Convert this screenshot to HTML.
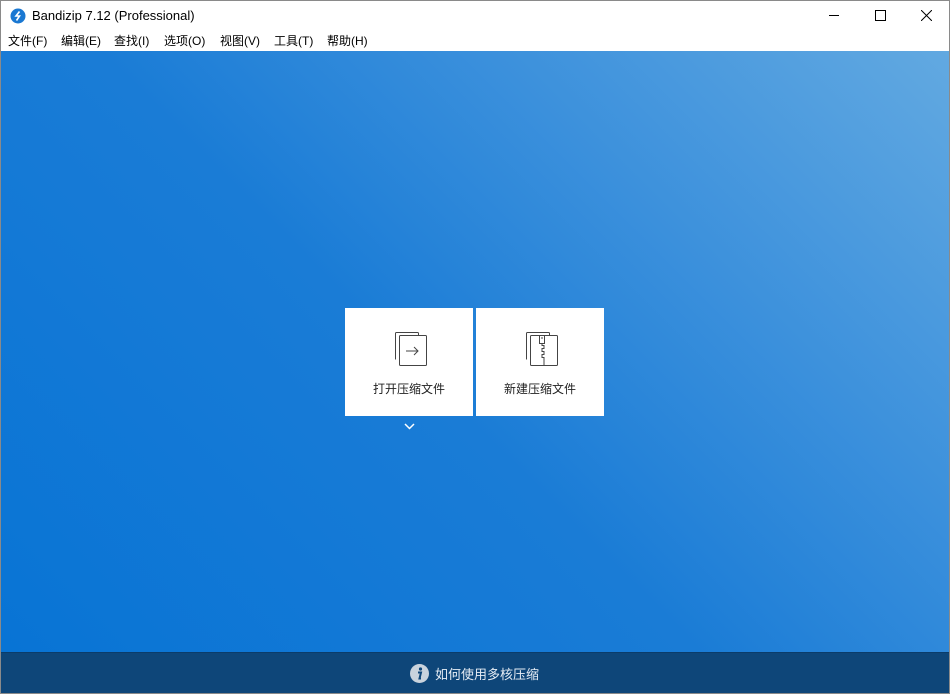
<!DOCTYPE html>
<html><head><meta charset="utf-8"><style>
*{margin:0;padding:0;box-sizing:border-box}
body{width:950px;height:694px;overflow:hidden;font-family:"Liberation Sans","Noto Sans CJK SC",sans-serif;background:#fff;position:relative}
.win{position:absolute;left:0;top:0;width:950px;height:694px;border:1px solid #8a8a8a}
.title{position:absolute;left:0;top:0;width:948px;height:30px;background:#fff}
.title .t{position:absolute;left:31px;top:7px;font-size:13px;color:#000}
.menu{position:absolute;left:0;top:30px;width:948px;height:20px;font-size:12px;color:#000}
.menu span{position:absolute;top:1px}
.main{position:absolute;left:0;top:50px;width:948px;height:601px;background:linear-gradient(225deg,#62a9e1 0%,#3b90dc 30%,#1a7cd6 55%,#0874d5 100%)}
.bot{position:absolute;left:0;top:651px;width:948px;height:41px;background:#0e4679;border-top:1px solid #0b3c6a}
.card{position:absolute;top:257px;width:128px;height:108px;background:#fff;font-size:12px;color:#222;text-align:center}
.card .l{position:absolute;left:0;right:0;top:72px}
.card svg{position:absolute;left:46px;top:22px}
</style></head><body><div class="win">
<div class="title">
<svg style="position:absolute;left:9px;top:7px" width="16" height="16" viewBox="0 0 16 16"><circle cx="8" cy="8" r="7.5" fill="#1a78d2"/><path d="M9.5 3.5L6 8h3.5L6.5 12.5" stroke="#fff" stroke-width="1.6" fill="none"/></svg>
<div class="t">Bandizip 7.12 (Professional)</div>
<svg style="position:absolute;left:828px;top:14px" width="10" height="2"><rect width="10" height="1" fill="#000"/></svg>
<svg style="position:absolute;left:874px;top:9px" width="11" height="11"><rect x=".5" y=".5" width="10" height="10" fill="none" stroke="#000"/></svg>
<svg style="position:absolute;left:920px;top:9px" width="11" height="11"><path d="M0 0L11 11M11 0L0 11" stroke="#000"/></svg>
</div>
<div class="menu">
<span style="left:7px">文件(F)</span><span style="left:60px">编辑(E)</span><span style="left:113px">查找(I)</span><span style="left:163px">选项(O)</span><span style="left:219px">视图(V)</span><span style="left:273px">工具(T)</span><span style="left:326px">帮助(H)</span>
</div>
<div class="main">
<div class="card" style="left:344px">
<svg width="36" height="38" viewBox="0 0 36 38"><path d="M4.5 29.5V3.5q0-1 1-1h21q1 0 1 1v1.5" fill="none" stroke="#444"/><rect x="8.5" y="5.5" width="27" height="30" rx="1" fill="#fff" stroke="#444"/><path d="M15 21h12M23 17l4 4-4 4" fill="none" stroke="#444"/></svg>
<div class="l">打开压缩文件</div></div>
<div class="card" style="left:475px">
<svg width="36" height="38" viewBox="0 0 36 38"><path d="M4.5 29.5V3.5q0-1 1-1h21q1 0 1 1v1.5" fill="none" stroke="#444"/><rect x="8.5" y="5.5" width="27" height="30" rx="1" fill="#fff" stroke="#444"/><path d="M17.5 5.5v8h5v-8M19 8h2M20 13.5v2h2v3h-2v3h2v3h-2v3h2v8" fill="none" stroke="#444"/></svg>
<div class="l">新建压缩文件</div></div>
<svg style="position:absolute;left:403px;top:372px" width="11" height="7"><path d="M1 1l4.5 4.5L10 1" stroke="#fff" stroke-width="1.5" fill="none"/></svg>
</div>
<div class="bot">
<svg style="position:absolute;left:409px;top:11px" width="19" height="19" viewBox="0 0 19 19"><circle cx="9.5" cy="9.5" r="9.5" fill="#c9d3dd"/><circle cx="10.5" cy="5" r="1.6" fill="#0e4679"/><path d="M8 8.5h3l-1.5 6h1.5" stroke="#0e4679" stroke-width="2" fill="none"/></svg>
<div style="position:absolute;left:434px;top:11px;font-size:13px;color:#e6edf5">如何使用多核压缩</div>
</div>
</div></body></html>
